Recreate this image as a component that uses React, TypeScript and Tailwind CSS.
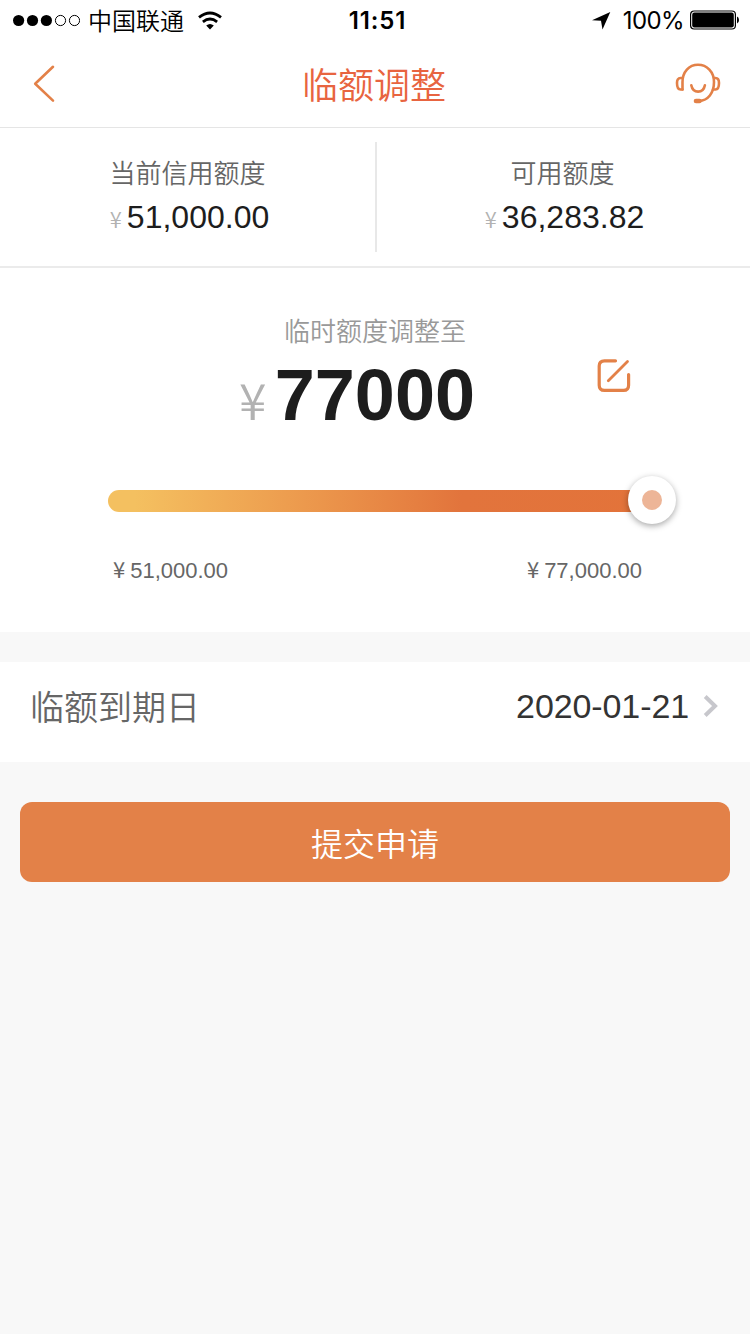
import React, { useState } from "react";

const MIN = 51000;
const MAX = 77000;

const format = (n: number) => n.toLocaleString("en-US", { minimumFractionDigits: 2 });

const StatusBar = () => (
    <div className="relative flex items-center h-10 pt-px pl-3 pr-2.5 text-black">
        <svg width="68" height="14" viewBox="0 0 68 14">
            <circle cx="6.6" cy="6.5" r="5.6" />
            <circle cx="20.5" cy="6.5" r="5.6" />
            <circle cx="34.4" cy="6.5" r="5.6" />
            <circle cx="48.5" cy="6.5" r="5.1" fill="none" stroke="#000" />
            <circle cx="62.5" cy="6.5" r="5.1" fill="none" stroke="#000" />
        </svg>
        <div className="ml-2 -mt-px text-2xl leading-10 whitespace-nowrap">中国联通</div>
        <svg className="ml-[13px]" width="26" height="20" viewBox="0 0 26 20" fill="none" stroke="#000" strokeWidth="2.8">
            <path d="M2 6.4 Q13 -2.4 24 6.4" />
            <path d="M5.9 10.8 Q13 5.2 20.1 10.8" />
            <path d="M9.2 14.6 Q13 11.6 16.8 14.6 L13 18.4Z" fill="#000" stroke="none" />
        </svg>
        <div className="absolute inset-x-0 pl-[5px] pt-px text-center font-['Inter',sans-serif] font-semibold text-2xl tracking-[0.9px]">11:51</div>
        <div className="flex-1" />
        <svg width="20" height="20" viewBox="0 0 20 20">
            <path d="M19.3 1 L1 9.3 L10 9.8 L11.5 18.6Z" />
        </svg>
        <div className="ml-3 pt-px font-['Inter',sans-serif] font-normal text-2xl leading-10 tracking-[-0.6px]">100%</div>
        <svg className="ml-1.5 -mt-px" width="50" height="20" viewBox="0 0 50 20">
            <rect x="0.6" y="1" width="44.8" height="18" rx="3.5" fill="none" stroke="#000" strokeWidth="1.2" />
            <rect x="2.2" y="2.6" width="41.6" height="14.8" rx="2.2" />
            <path d="M47 6.5 Q49 7 49 10 Q49 13 47 13.5Z" />
        </svg>
    </div>
);

const NavBar = () => (
    <div className="flex items-center justify-between h-[88px] pl-8 pr-7 border-b border-[#e5e5e5]">
        <svg width="46" height="40" viewBox="0 0 46 40" fill="none" stroke="#e38148" strokeWidth="2.6" strokeLinecap="round" strokeLinejoin="round">
            <path d="M21 2.8 L3.2 19.8 L21 36.6" />
        </svg>
        <div className="-ml-1 -mt-px text-4xl text-[#e86440] leading-[44px]">临额调整</div>
        <svg className="-mt-px" width="48" height="44" viewBox="0 0 48 44" fill="none" stroke="#e38148" strokeWidth="2.6" strokeLinecap="round">
            <path d="M8.5 28.5 V21 C8.5 11 15 3.8 24 3.8 C33 3.8 40 11 40 21 C40 32 34 39.5 25 40" />
            <path d="M8.5 17 H6.5 C4 17 3 19 3 22 C3 26 4 28.5 6.5 28.5 H8.5" />
            <path d="M40 17 H41.5 C44 17 45 19 45 22 C45 26 44 28.5 41.5 28.5 H39" />
            <path d="M17.3 24.2 C19 32.8 29.2 32.8 30.9 24.2" />
            <path d="M22 40 H25.5" strokeWidth="4.6" />
        </svg>
    </div>
);

const Balance = ({ label, value }: { label: string; value: number }) => (
    <div className="flex-1 flex flex-col items-center pt-7">
        <div className="text-[26px] leading-8 text-[#666666]">{label}</div>
        <div className="flex items-baseline mt-[9px] pl-1 leading-10">
            <div className="text-[22px] text-[#b2b2b2]">¥</div>
            <div className="ml-[5px] text-[32px] text-[#1d1d1d] font-['Liberation_Sans',sans-serif] font-normal">{format(value)}</div>
        </div>
    </div>
);

const RangeLabel = ({ value }: { value: number }) => (
    <div className="flex items-baseline text-[22px] leading-7 text-[#666666]">
        <div className="font-normal">¥</div>
        <div className="ml-[5px] font-['Liberation_Sans',sans-serif] font-normal">{format(value)}</div>
    </div>
);

const App = () => {
    const [amount, setAmount] = useState(MAX);
    const percent = ((amount - MIN) / (MAX - MIN)) * 100;

    return (
        <div className="w-[750px] min-h-[1334px] bg-[#f8f8f8] font-['Noto_Sans_CJK_SC',sans-serif] font-[350]">
            <div className="bg-white">
                <StatusBar />
                <NavBar />
                {/* Credit limits */}
                <div className="flex h-[140px] border-b-2 border-[#ebebeb]">
                    <Balance label="当前信用额度" value={51000} />
                    <div className="w-0.5 -mr-0.5 h-[110px] mt-3.5 bg-[#e8e8e8]" />
                    <Balance label="可用额度" value={36283.82} />
                </div>
                {/* Temporary limit */}
                <div className="h-[364px] pt-[46px]">
                    <div className="text-center text-[26px] leading-8 text-[#999999]">临时额度调整至</div>
                    <div className="flex items-center h-24 mt-0.5 pl-[239px]">
                        <div className="flex items-baseline w-[236px] leading-[96px]">
                            <div className="w-[36px] text-[50px] text-[#b2b2b2]">¥</div>
                            <div className="text-[72px] font-bold text-[#1d1d1d] font-['Liberation_Sans',sans-serif]">{amount}</div>
                        </div>
                        <svg className="ml-[121px] -mt-[41px]" width="36" height="36" viewBox="0 0 36 36" fill="none" stroke="#e38148" strokeWidth="3.2" strokeLinecap="round">
                            <path d="M19.5 2.8 H8.5 Q3.2 2.8 3.2 8 V27.2 Q3.2 32.4 8.5 32.4 H27.5 Q32.6 32.4 32.6 27.2 V16.5" />
                            <path d="M12.3 22.8 L31.5 3.6" strokeWidth="2.8" />
                        </svg>
                    </div>
                    <div className="relative ml-[108px] mt-[46px] w-[544px] h-[22px] rounded-full bg-linear-to-r from-[#f4c060] from-5% via-[#e2743c] via-65% to-[#e3733a]">
                        <div
                            className="absolute -top-3.5 -ml-6 flex items-center justify-center size-12 rounded-full bg-white shadow-[0_2px_6px_rgba(0,0,0,0.35)]"
                            style={{ left: `${percent}%` }}
                        >
                            <div className="size-5 rounded-full bg-[#edb597]" />
                        </div>
                        <input
                            type="range"
                            min={MIN}
                            max={MAX}
                            step={100}
                            value={amount}
                            onChange={(ev) => setAmount(Number(ev.target.value))}
                            className="absolute inset-0 w-full opacity-0"
                        />
                    </div>
                    <div className="flex justify-between mt-[42px] ml-[113px] mr-[108px]">
                        <RangeLabel value={MIN} />
                        <RangeLabel value={MAX} />
                    </div>
                </div>
            </div>
            {/* Expiry date */}
            <div className="flex items-center h-[100px] mt-[30px] px-[30px] pb-3 bg-white text-[34px]">
                <div className="flex-1 -mt-px text-[#666666]">临额到期日</div>
                <div className="text-[#333333] font-['Liberation_Sans',sans-serif] font-normal tracking-[-0.1px]">2020-01-21</div>
                <svg className="ml-[13px]" width="18" height="24" viewBox="0 0 18 24" fill="none" stroke="#c7c7cc" strokeWidth="4">
                    <path d="M3.2 2.5 L13 12 L3.2 21.5" />
                </svg>
            </div>
            <div className="px-5 pt-10">
                <button className="w-full h-20 pb-px rounded-xl bg-[#e38148] text-white text-[32px]">提交申请</button>
            </div>
        </div>
    );
};

export default App;
